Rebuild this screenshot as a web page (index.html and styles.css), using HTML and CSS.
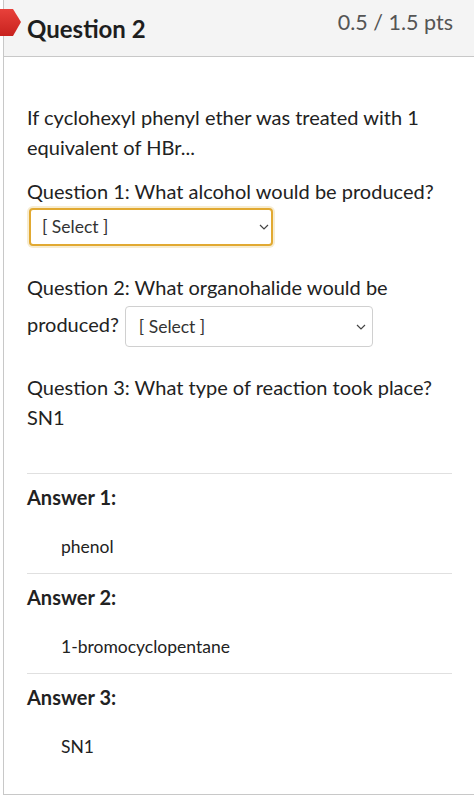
FILE: index.html
```html
<!DOCTYPE html>
<html>
<head>
<meta charset="utf-8">
<link rel="stylesheet" href="styles.css">
</head>
<body>
<div class="question">
  <div class="header">
    <svg class="badge" width="22" height="30" viewBox="0 0 22 30">
      <defs>
        <linearGradient id="rg" x1="0" y1="0" x2="0" y2="1">
          <stop offset="0" stop-color="#e8413b"/>
          <stop offset="1" stop-color="#c8221e"/>
        </linearGradient>
      </defs>
      <polygon points="-2,1 13,1 21,14 13,28 -2,28" fill="url(#rg)"/>
    </svg>
    <h2 class="title">Question 2</h2>
    <div class="pts">0.5 / 1.5 pts</div>
  </div>
  <div class="body">
    <p class="intro">If cyclohexyl phenyl ether was treated with 1 equivalent of HBr...</p>
    <p class="q">Question 1: What alcohol would be produced?<br><span class="sel focused"><span class="seltext">[ Select ]</span><svg class="chev" width="10" height="6" viewBox="0 0 10 6"><path d="M1 1l4 4 4-4" fill="none" stroke="#444" stroke-width="1.2"/></svg></span></p>
    <p class="q q2"><span>Question 2: What organohalide would be</span><br><span>produced?</span><span class="sel inline"><span class="seltext">[ Select ]</span><svg class="chev" width="10" height="6" viewBox="0 0 10 6"><path d="M1 1l4 4 4-4" fill="none" stroke="#444" stroke-width="1.2"/></svg></span></p>
    <p class="q q3">Question 3: What type of reaction took place?<br>SN1</p>
    <div class="answers">
      <div class="answer">
        <div class="alabel">Answer 1:</div>
        <div class="aval">phenol</div>
      </div>
      <div class="answer">
        <div class="alabel">Answer 2:</div>
        <div class="aval">1-bromocyclopentane</div>
      </div>
      <div class="answer">
        <div class="alabel">Answer 3:</div>
        <div class="aval">SN1</div>
      </div>
    </div>
  </div>
</div>
</body>
</html>
```

FILE: styles.css
```css
html, body {
  margin: 0;
  padding: 0;
  background: #fff;
}
body {
  font-family: Lato, "Liberation Sans", sans-serif;
  color: #222;
  width: 474px;
  height: 806px;
  overflow: hidden;
}
.question {
  margin-left: 3px;
  width: 480px;
  border-left: 1px solid #c8c8c8;
  border-bottom: 1px solid #c8c8c8;
  height: 795px;
  box-sizing: border-box;
}
.header {
  position: relative;
  background: #f4f4f4;
  border-bottom: 1px solid #c8c8c8;
  height: 57px;
  box-sizing: border-box;
  display: flex;
  justify-content: space-between;
  padding: 0 30px 0 23px;
}
.badge {
  position: absolute;
  left: -4px;
  top: 8px;
}
.title {
  margin: 0;
  font-size: 24px;
  font-weight: 700;
  line-height: 24px;
  padding-top: 17px;
  color: #1e1e1e;
}
.pts {
  font-size: 21.5px;
  line-height: 21px;
  color: #555;
  padding-top: 12px;
}
.body {
  padding: 45px 28px 0 23px;
}
p {
  margin: 0;
  font-size: 20px;
  line-height: 30px;
  width: 424px;
}
.intro {
  margin-bottom: 14px;
}
.sel {
  display: flex;
  align-items: center;
  justify-content: space-between;
  box-sizing: border-box;
  font-size: 17.5px;
  color: #333;
  background: #fff;
  border: 1px solid #d0d0d0;
  border-radius: 4px;
}
.seltext {
  line-height: 20px;
}
.sel.focused {
  margin: 2px 0 0 2px;
  width: 244px;
  height: 38px;
  padding: 0 2px 0 11px;
  border: 2px solid #e1a932;
  box-shadow: 0 0 0 2px #f7ecd0;
}
.chev {
  display: block;
}
.q2 {
  margin-top: 26px;
}
.sel.inline {
  display: inline-flex;
  vertical-align: middle;
  width: 248px;
  height: 41px;
  padding: 0 6px 0 13px;
  margin: 7px 0 2px 6px;
  position: relative;
  top: -3px;
}
.q3 {
  margin-top: 20px;
}
.answers {
  margin-top: 41px;
  width: 425px;
}
.answer {
  border-top: 1px solid #e0e0e0;
  height: 100px;
  box-sizing: border-box;
}
.alabel {
  font-size: 20px;
  font-weight: 700;
  line-height: 24px;
  padding-top: 11px;
}
.aval {
  font-size: 17.5px;
  line-height: 24px;
  padding: 26px 0 0 34px;
}
```
